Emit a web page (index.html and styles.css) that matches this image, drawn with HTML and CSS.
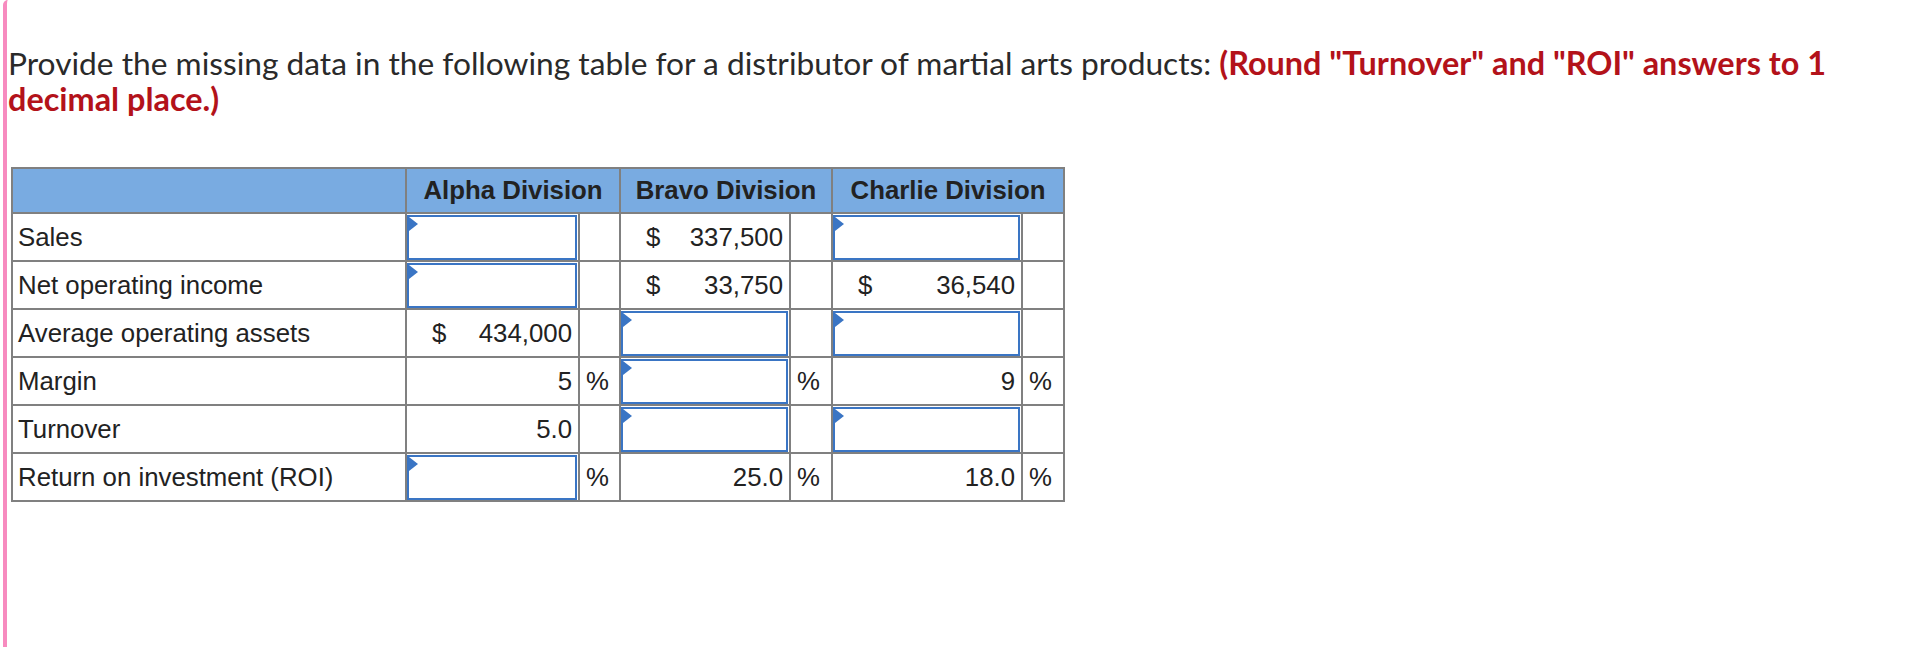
FILE: index.html
```html
<!DOCTYPE html>
<html lang="en">
<head>
<meta charset="utf-8">
<title>Martial arts distributor</title>
<link rel="stylesheet" href="styles.css">
</head>
<body>
<div class="frame">
  <p class="prompt">Provide the missing data in the following table for a distributor of martial arts products: <strong class="hint">(Round "Turnover" and "ROI" answers to 1</strong> <strong class="hint">decimal place.)</strong></p>
  <table class="data">
    <colgroup>
      <col class="c-label">
      <col class="c-a">
      <col class="c-as">
      <col class="c-b">
      <col class="c-bs">
      <col class="c-c">
      <col class="c-cs">
    </colgroup>
    <thead>
      <tr class="head">
        <th></th>
        <th colspan="2">Alpha Division</th>
        <th colspan="2">Bravo Division</th>
        <th colspan="2">Charlie Division</th>
      </tr>
    </thead>
    <tbody>
      <tr>
        <td class="label">Sales</td>
        <td class="in"><span class="box"></span></td><td class="unit"></td>
        <td class="money"><span>$</span><span>337,500</span></td><td class="unit"></td>
        <td class="in"><span class="box"></span></td><td class="unit"></td>
      </tr>
      <tr>
        <td class="label">Net operating income</td>
        <td class="in"><span class="box"></span></td><td class="unit"></td>
        <td class="money"><span>$</span><span>33,750</span></td><td class="unit"></td>
        <td class="money"><span>$</span><span>36,540</span></td><td class="unit"></td>
      </tr>
      <tr>
        <td class="label">Average operating assets</td>
        <td class="money"><span>$</span><span>434,000</span></td><td class="unit"></td>
        <td class="in"><span class="box"></span></td><td class="unit"></td>
        <td class="in"><span class="box"></span></td><td class="unit"></td>
      </tr>
      <tr>
        <td class="label">Margin</td>
        <td class="num">5</td><td class="unit">%</td>
        <td class="in"><span class="box"></span></td><td class="unit">%</td>
        <td class="num">9</td><td class="unit">%</td>
      </tr>
      <tr>
        <td class="label">Turnover</td>
        <td class="num">5.0</td><td class="unit"></td>
        <td class="in"><span class="box"></span></td><td class="unit"></td>
        <td class="in"><span class="box"></span></td><td class="unit"></td>
      </tr>
      <tr>
        <td class="label">Return on investment (ROI)</td>
        <td class="in"><span class="box"></span></td><td class="unit">%</td>
        <td class="num">25.0</td><td class="unit">%</td>
        <td class="num">18.0</td><td class="unit">%</td>
      </tr>
    </tbody>
  </table>
</div>
</body>
</html>
```
FILE: styles.css
```css
html, body {
  margin: 0;
  padding: 0;
  background: #ffffff;
}

.frame {
  margin-left: 3px;
  min-height: 647px;
  box-sizing: border-box;
  border-left: 4px solid #f78bbf;
  border-top-left-radius: 5px;
  padding: 45px 0 0 1px;
}

.prompt {
  margin: 0;
  font-family: "Lato", "Liberation Sans", sans-serif;
  font-size: 31.7px;
  line-height: 36px;
  color: #2a2a2a;
}

.hint {
  color: #b3121a;
  font-weight: 700;
  font-size: 32.4px;
}

.data {
  margin: 50px 0 0 3px;
  border-collapse: separate;
  border-spacing: 0;
  table-layout: fixed;
  width: 1054px;
  border-left: 2px solid #808080;
  border-top: 2px solid #808080;
  font-family: "Liberation Sans", Arial, sans-serif;
  font-size: 25.8px;
  color: #222222;
}

.c-label { width: 394px; }
.c-a { width: 173px; }
.c-as { width: 41px; }
.c-b { width: 170px; }
.c-bs { width: 42px; }
.c-c { width: 190px; }
.c-cs { width: 42px; }

.data th,
.data td {
  box-sizing: border-box;
  border-right: 2px solid #808080;
  border-bottom: 2px solid #808080;
  vertical-align: middle;
  white-space: nowrap;
  overflow: hidden;
}

.head {
  height: 45px;
}

.data th {
  background: #79abe1;
  font-weight: 700;
  text-align: center;
  padding: 0;
}

.data tbody tr {
  height: 48px;
}

.data td {
  padding: 1px 6px 0 6px;
}

.data td.label {
  padding-left: 5px;
  text-align: left;
}

.data td.num {
  text-align: right;
}

.data td.unit {
  text-align: left;
}

.data td.money {
  padding-left: 25px;
  text-align: right;
}

.money span:first-child {
  float: left;
}

.data td.in {
  padding: 1px 1px 0 0;
  vertical-align: top;
}

.box {
  position: relative;
  display: block;
  box-sizing: border-box;
  height: 45px;
  border: 2px solid #3a75c4;
  background: #ffffff;
}

.box::before {
  content: "";
  position: absolute;
  left: 0;
  top: 0;
  width: 0;
  height: 0;
  border-top: 7px solid transparent;
  border-bottom: 7px solid transparent;
  border-left: 9px solid #3a75c4;
}
```
